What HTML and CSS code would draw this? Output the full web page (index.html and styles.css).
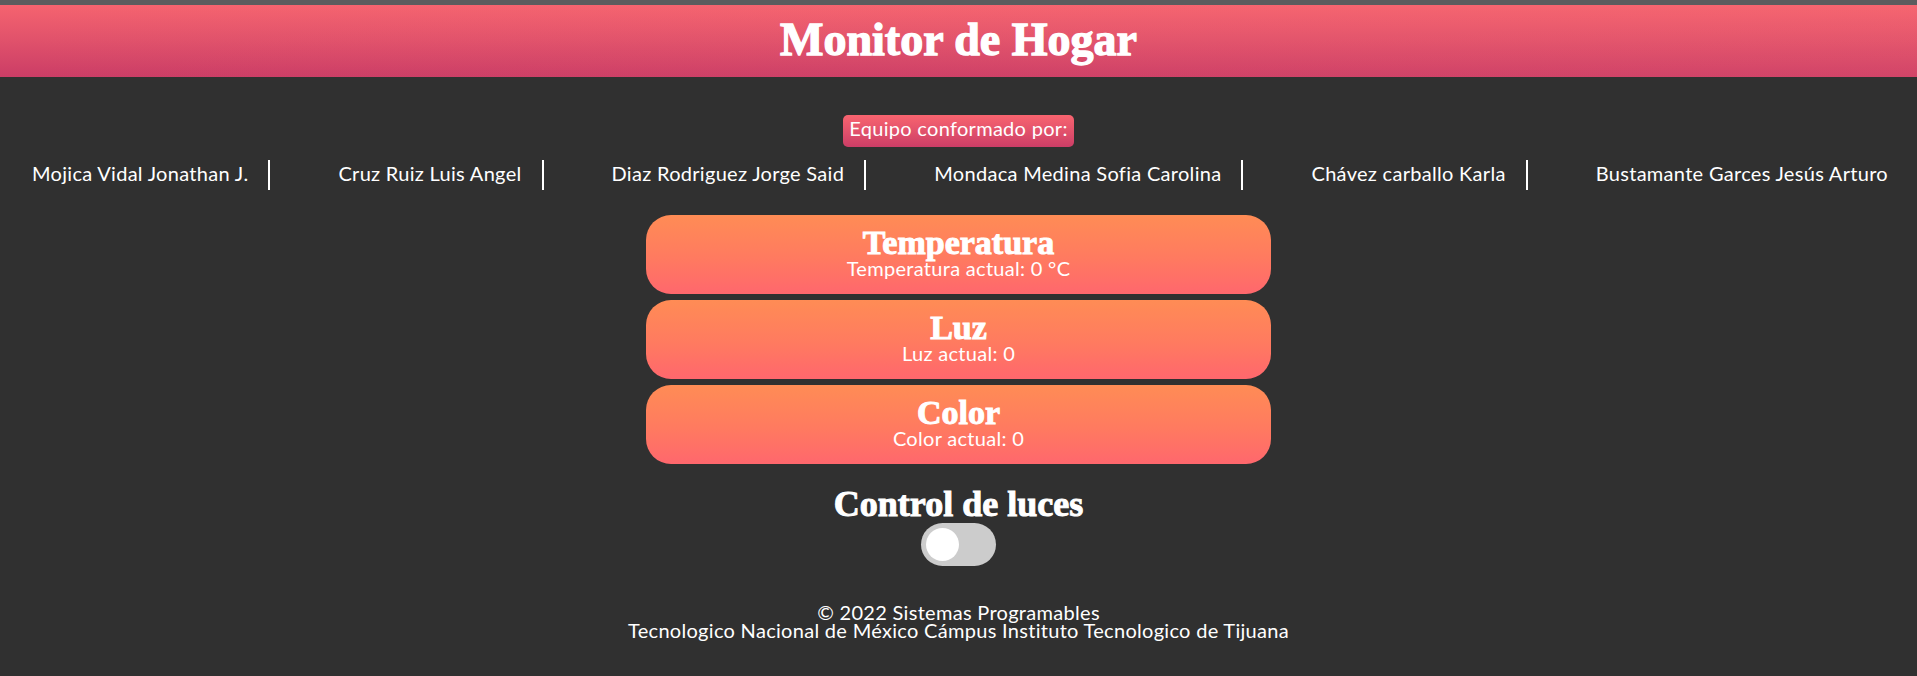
FILE: index.html
```html
<!DOCTYPE html>
<html lang="es">
<head>
<meta charset="utf-8">
<title>Monitor de Hogar</title>
<link rel="stylesheet" href="styles.css">
</head>
<body>
<header class="topbar">
  <h1 class="title">Monitor de Hogar</h1>
</header>
<main class="main">
  <section class="team">
    <div class="badge">Equipo conformado por:</div>
    <ul class="members">
      <li class="member">Mojica Vidal Jonathan J.</li>
      <li class="member">Cruz Ruiz Luis Angel</li>
      <li class="member">Diaz Rodriguez Jorge Said</li>
      <li class="member">Mondaca Medina Sofia Carolina</li>
      <li class="member">Chávez carballo Karla</li>
      <li class="member">Bustamante Garces Jesús Arturo</li>
    </ul>
  </section>
  <section class="cards">
    <div class="card">
      <h2 class="card-title">Temperatura</h2>
      <p class="card-value">Temperatura actual: 0 °C</p>
    </div>
    <div class="card">
      <h2 class="card-title">Luz</h2>
      <p class="card-value">Luz actual: 0</p>
    </div>
    <div class="card">
      <h2 class="card-title">Color</h2>
      <p class="card-value">Color actual: 0</p>
    </div>
  </section>
  <section class="control">
    <h2 class="control-title">Control de luces</h2>
    <label class="switch">
      <input type="checkbox" class="switch-input">
      <span class="switch-knob"></span>
    </label>
  </section>
</main>
<footer class="footer">
  <p class="footer-text">© 2022 Sistemas Programables<br>Tecnologico Nacional de México Cámpus Instituto Tecnologico de Tijuana</p>
</footer>
</body>
</html>
```
FILE: styles.css
```css
* { box-sizing: border-box; }

html, body {
  margin: 0;
  padding: 0;
}

body {
  background: #303030;
  color: #ffffff;
  font-family: "Lato", "Liberation Sans", sans-serif;
  font-size: 20px;
  letter-spacing: 0.3px;
  border-top: 5px solid #5b5c5e;
  min-height: 676px;
}

.topbar {
  height: 72px;
  padding-bottom: 3px;
  background:
    linear-gradient(to right, rgba(255, 255, 255, 0) 0%, rgba(255, 120, 120, 0.12) 100%),
    linear-gradient(to bottom, #f5636f 0%, #e0516b 50%, #cb3d66 100%);
  display: flex;
  justify-content: center;
}

.title {
  margin: 0;
  font-family: "Liberation Serif", serif;
  font-weight: 700;
  font-size: 46px;
  line-height: 69px;
  letter-spacing: 0;
  -webkit-text-stroke: 1.3px #ffffff;
  color: #ffffff;
}

.main {
  display: flex;
  flex-direction: column;
  align-items: center;
}

.team {
  width: 100%;
  display: flex;
  flex-direction: column;
  align-items: center;
  padding-top: 38px;
}

.badge {
  height: 32px;
  padding: 0 6px 6px;
  line-height: 26px;
  border-radius: 5px;
  background: linear-gradient(to bottom, #f8646f 0%, #e0506b 55%, #cc3d66 100%);
}

.members {
  list-style: none;
  margin: 13px 0 0;
  padding: 0 9px 0 12px;
  width: 100%;
  display: flex;
  justify-content: space-between;
}

.member {
  padding: 0 20px 4px;
  line-height: 26px;
  border-right: 2px solid #ffffff;
  white-space: nowrap;
}

.member:last-child {
  border-right: none;
}

.cards {
  margin-top: 25px;
  width: 625px;
  display: flex;
  flex-direction: column;
  gap: 6px;
}

.card {
  height: 79px;
  padding-top: 12px;
  border-radius: 25px;
  background: linear-gradient(to bottom, #ff8c55 0%, #ff7a60 55%, #ff676d 100%);
  display: flex;
  flex-direction: column;
  align-items: center;
}

.card-title {
  margin: 0;
  font-family: "Liberation Serif", serif;
  font-weight: 700;
  font-size: 34px;
  line-height: 32px;
  letter-spacing: 0;
  -webkit-text-stroke: 1px #ffffff;
}

.card-value {
  margin: 0;
  line-height: 18px;
}

.control {
  margin-top: 22px;
  display: flex;
  flex-direction: column;
  align-items: center;
}

.control-title {
  margin: 0;
  font-family: "Liberation Serif", serif;
  font-weight: 700;
  font-size: 36px;
  line-height: 37px;
  letter-spacing: 0;
  -webkit-text-stroke: 1px #ffffff;
}

.switch {
  position: relative;
  display: block;
  width: 75px;
  height: 43px;
  border-radius: 22px;
  background: #cccccc;
  cursor: pointer;
}

.switch-input {
  display: none;
}

.switch-knob {
  position: absolute;
  left: 5px;
  top: 5px;
  width: 33px;
  height: 33px;
  border-radius: 50%;
  background: #ffffff;
}

.footer {
  margin-top: 37px;
  text-align: center;
}

.footer-text {
  margin: 0;
  line-height: 18px;
}
```
